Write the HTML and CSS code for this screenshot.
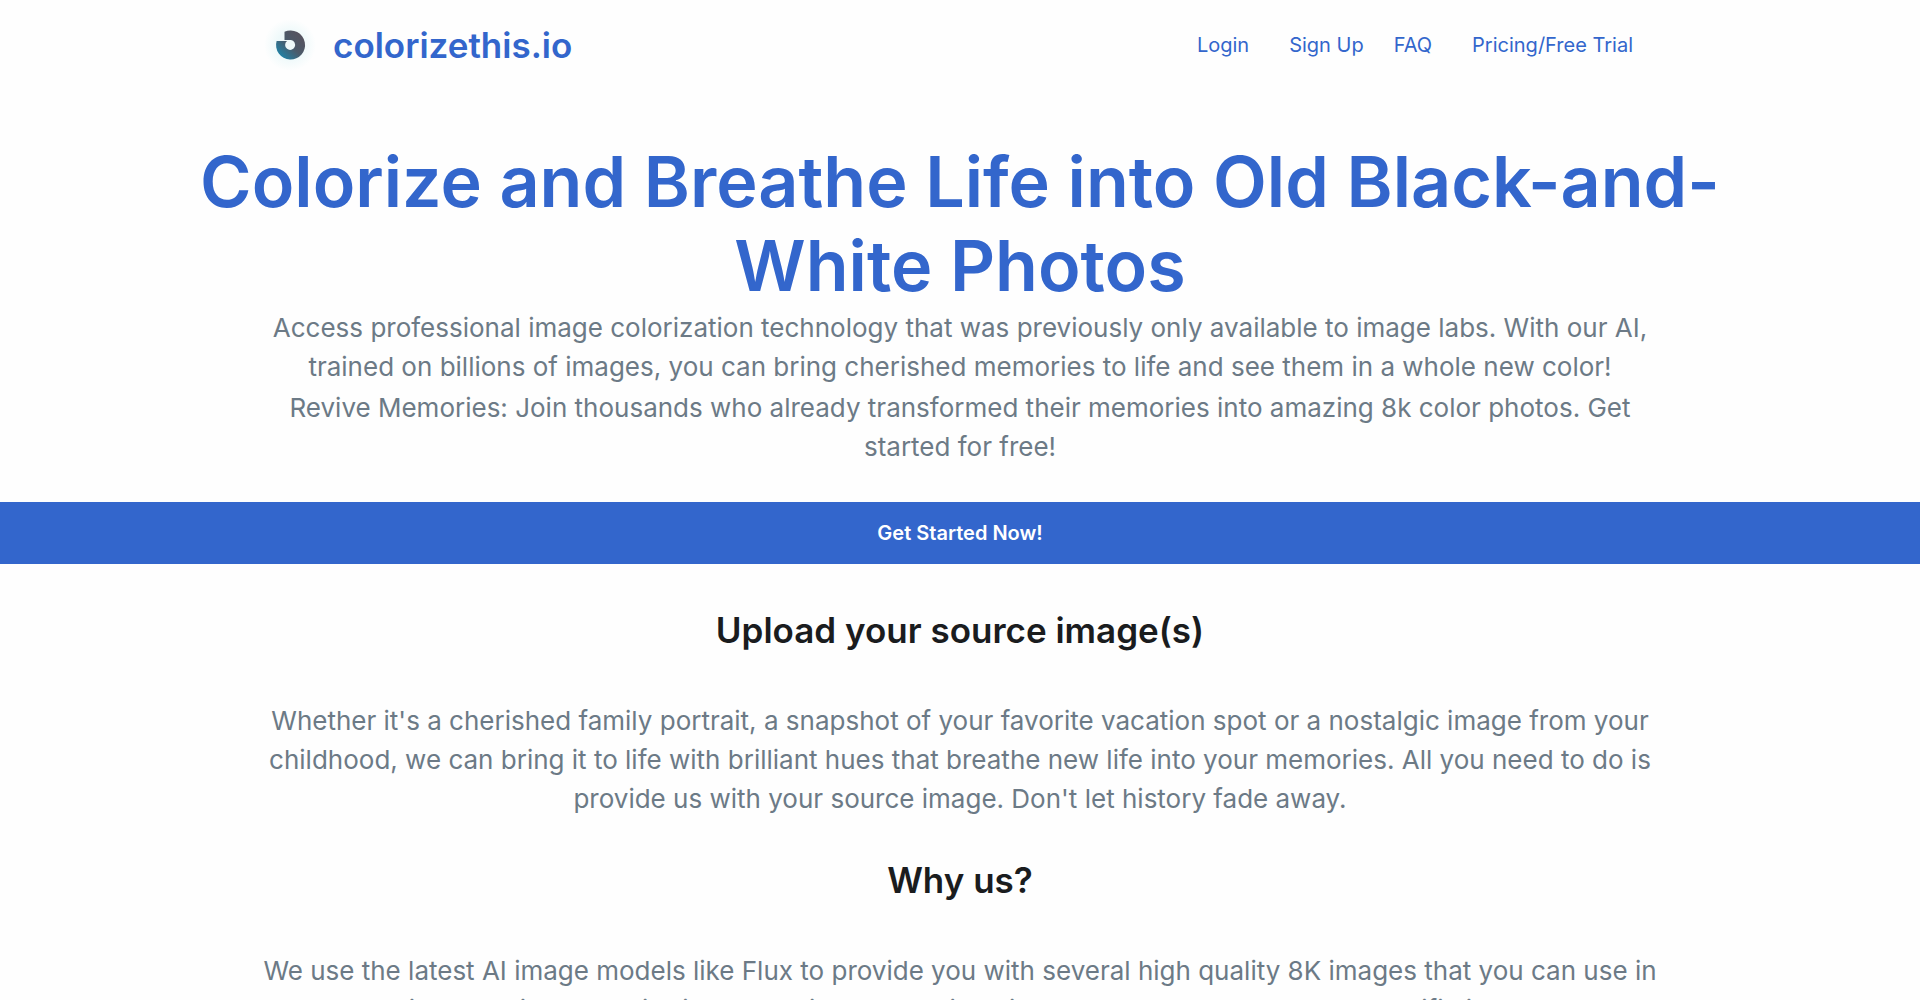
FILE: index.html
```html
<!DOCTYPE html>
<html lang="en">
<head>
    <meta charset="UTF-8">
    <meta name="viewport" content="width=device-width, initial-scale=1.0">
    <title>colorizethis.io</title>
    <link rel="stylesheet" href="styles.css">
</head>
<body>
    <header class="header">
        <a class="brand" href="#">
            <svg class="logo" viewBox="0 0 60 60" aria-hidden="true">
                <defs>
                    <linearGradient id="ring" x1="0.8" y1="0.1" x2="0.1" y2="0.8">
                        <stop offset="0" stop-color="#56535f"/>
                        <stop offset="0.5" stop-color="#4b5a6a"/>
                        <stop offset="1" stop-color="#237fa2"/>
                    </linearGradient>
                    <radialGradient id="glow">
                        <stop offset="0.5" stop-color="#eef9fa"/>
                        <stop offset="1" stop-color="#fefefe"/>
                    </radialGradient>
                </defs>
                <circle cx="30" cy="30" r="26" fill="url(#glow)"/>
                <path d="M24.500 16.800 A14.500 14.500 0 1 1 16.600 26 H27 A5 5 0 1 0 31 25 H24.500 Z" fill="url(#ring)"/>
            </svg>
            <span>colorizethis.io</span>
        </a>
        <nav class="nav">
            <div class="account">
                <a href="#">Login</a>
                <a href="#">Sign Up</a>
            </div>
            <div class="info">
                <a href="#">FAQ</a>
                <a href="#">Pricing/Free Trial</a>
            </div>
        </nav>
    </header>

    <main>
        <section class="hero">
            <h1>Colorize and Breathe Life into Old Black-and-White Photos</h1>
            <p class="text">Access professional image colorization technology that was previously only available to image labs. With our AI, trained on billions of images, you can bring cherished memories to life and see them in a whole new color!</p>
            <p class="text">Revive Memories: Join thousands who already transformed their memories into amazing 8k color photos. Get started for free!</p>
        </section>

        <button class="cta" type="button">Get Started Now!</button>

        <section class="block">
            <h2>Upload your source image(s)</h2>
            <p class="text">Whether it's a cherished family portrait, a snapshot of your favorite vacation spot or a nostalgic image from your childhood, we can bring it to life with brilliant hues that breathe new life into your memories. All you need to do is provide us with your source image. Don't let history fade away.</p>
        </section>

        <section class="block">
            <h2>Why us?</h2>
            <p class="text">We use the latest AI image models like Flux to provide you with several high quality 8K images that you can use in magazines and in your editorials. Experience amazing visuals created based upon a specific image and</p>
        </section>
    </main>
</body>
</html>
```

FILE: styles.css
```css
* {
    box-sizing: border-box;
}
body {
    margin: 0;
    font-family: Inter, sans-serif;
    color: #1a1c1e;
    background: #fefefe;
    overflow-x: hidden;
}
h1, h2, p {
    margin: 0;
}
a {
    color: #3366cc;
    text-decoration: none;
}
.header {
    display: flex;
    align-items: center;
    justify-content: space-between;
    max-width: 1400px;
    margin: 0 auto;
    padding: 15px 27px 15px 0;
}
.brand {
    display: flex;
    align-items: center;
    gap: 13px;
    font-size: 35px;
    font-weight: 600;
}
.logo {
    width: 60px;
    height: 60px;
}
.nav {
    display: flex;
    gap: 30px;
    font-size: 20px;
}
.account, .info {
    display: flex;
    gap: 40px;
}
.hero {
    padding: 50px 40px 36px;
    text-align: center;
}
.hero h1 {
    max-width: 1600px;
    margin: 0 auto;
    color: #3366cc;
    font-size: 70px;
    font-weight: 600;
    line-height: 84px;
}
.text {
    max-width: 1420px;
    margin: 0 auto;
    color: #6c7a86;
    font-size: 26px;
    line-height: 39px;
}
.text + .text {
    margin-top: 2px;
}
.cta {
    display: block;
    width: 100%;
    height: 62px;
    margin-bottom: 40px;
    border: none;
    background: #3366cc;
    color: #fff;
    font-family: inherit;
    font-size: 20px;
    font-weight: 600;
    cursor: pointer;
}
.block {
    padding: 0 40px 36px;
    text-align: center;
}
.block h2 {
    margin-bottom: 45px;
    font-size: 35px;
    font-weight: 600;
    line-height: 52px;
}
```
